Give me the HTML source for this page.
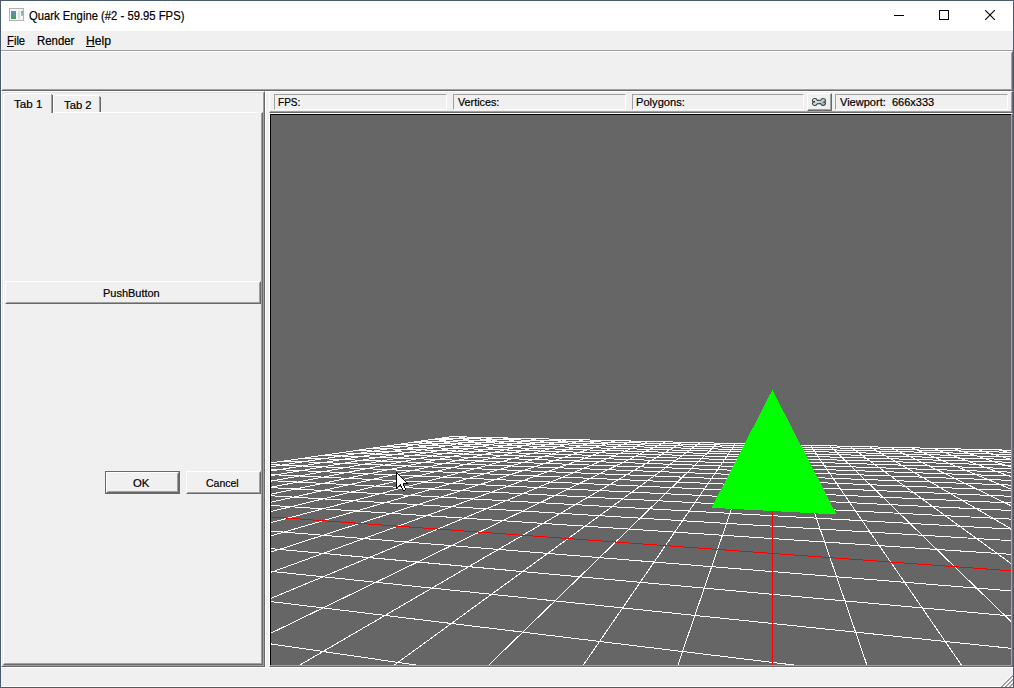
<!DOCTYPE html>
<html><head><meta charset="utf-8">
<style>
*{margin:0;padding:0;box-sizing:border-box}
html,body{width:1014px;height:688px;overflow:hidden;background:#f0f0f0;font-family:"Liberation Sans",sans-serif;color:#000}
.a{position:absolute}
.t{position:absolute;white-space:pre;line-height:1;font-family:"Liberation Sans",sans-serif;color:#000;transform-origin:0 0;-webkit-text-stroke:0.2px #000}
.r1{position:absolute;border-style:solid;border-width:1px;border-color:#fff #696969 #696969 #fff}
.r2{position:absolute;border-style:solid;border-width:1px;border-color:#e3e3e3 #a0a0a0 #a0a0a0 #e3e3e3}
.r2b{position:absolute;border-style:solid;border-width:1px;border-color:#f0f0f0 #a0a0a0 #a0a0a0 #f0f0f0}
.sk{position:absolute;border-style:solid;border-width:1px;border-color:#a0a0a0 #fff #fff #a0a0a0}
.gl{position:absolute;left:0;top:0}
</style></head><body>
<!-- window border -->
<div class="a" style="left:0;top:0;width:1014px;height:688px;border:1px solid #485c6d"></div>
<!-- title bar -->
<div class="a" style="left:1px;top:1px;width:1012px;height:30px;background:#fff"></div>
<!-- app icon -->
<div class="a" style="left:9px;top:8px;width:15px;height:13px;border:1px solid #b0b4b8;background:#f6f6f8"></div>
<div class="a" style="left:11px;top:11px;width:5px;height:8px;background:linear-gradient(#6a8ccc,#3fa04c)"></div>
<div class="a" style="left:18px;top:11px;width:2px;height:8px;background:#dedede"></div>
<div class="a" style="left:21px;top:11px;width:2px;height:5px;background:linear-gradient(#7a9cd0,#98d488)"></div>
<div class="t" style="left:29.35px;top:11px;font-size:11.9px;transform:scaleX(0.9481)">Quark Engine (#2 - 59.95 FPS)</div>
<!-- caption buttons -->
<div class="a" style="left:894px;top:15px;width:10px;height:1px;background:#000"></div>
<div class="a" style="left:939px;top:10px;width:10px;height:10px;border:1px solid #000"></div>
<svg class="a" style="left:985px;top:10px" width="10" height="10" viewBox="0 0 10 10"><path d="M0 0L10 10M10 0L0 10" stroke="#000" stroke-width="1.1"/></svg>
<!-- menu -->
<div class="t" style="left:7.3px;top:35px;font-size:12.0px;transform:scaleX(0.9368)"><u>F</u>ile</div>
<div class="t" style="left:36.95px;top:35px;font-size:12.0px;transform:scaleX(0.95)">Render</div>
<div class="t" style="left:86.4px;top:35px;font-size:12.0px;transform:scaleX(1.0125)"><u>H</u>elp</div>
<div class="a" style="left:1px;top:50px;width:1012px;height:1px;background:#a0a0a0"></div>
<!-- toolbar area raised -->
<div class="r1" style="left:1px;top:51px;width:1012px;height:40px"></div>
<div class="r2b" style="left:2px;top:52px;width:1010px;height:38px"></div>
<div class="a" style="left:1px;top:91px;width:1012px;height:1px;background:#fff"></div>
<!-- left dock -->
<div class="r1" style="left:1px;top:91px;width:264px;height:576px"></div>
<div class="r2" style="left:2px;top:92px;width:262px;height:574px"></div>
<!-- tab pane -->
<div class="r1" style="left:3px;top:112px;width:260px;height:553px"></div>
<div class="a" style="left:261px;top:113px;width:1px;height:551px;background:#a0a0a0"></div>
<div class="a" style="left:4px;top:663px;width:258px;height:1px;background:#a0a0a0"></div>
<!-- tab1 selected -->
<div class="a" style="left:3px;top:93px;width:50px;height:21px;background:#f0f0f0"></div>
<div class="a" style="left:5px;top:93px;width:46px;height:1px;background:#fff"></div>
<div class="a" style="left:4px;top:94px;width:1px;height:1px;background:#fff"></div>
<div class="a" style="left:3px;top:95px;width:1px;height:19px;background:#fff"></div>
<div class="a" style="left:51px;top:94px;width:1px;height:19px;background:#a0a0a0"></div>
<div class="a" style="left:52px;top:95px;width:1px;height:18px;background:#696969"></div>
<div class="t" style="left:13.6px;top:99px;font-size:11.0px;transform:scaleX(1.0538)">Tab 1</div>
<!-- tab2 -->
<div class="a" style="left:54px;top:95px;width:45px;height:1px;background:#fff"></div>
<div class="a" style="left:53px;top:96px;width:1px;height:16px;background:#fff"></div>
<div class="a" style="left:99px;top:96px;width:1px;height:16px;background:#a0a0a0"></div>
<div class="a" style="left:100px;top:97px;width:1px;height:15px;background:#696969"></div>
<div class="t" style="left:64.0px;top:100px;font-size:11.0px;transform:scaleX(1.0231)">Tab 2</div>
<!-- PushButton -->
<div class="r1" style="left:5px;top:281px;width:256px;height:23px"></div>
<div class="r2b" style="left:6px;top:282px;width:254px;height:21px"></div>
<div class="t" style="left:103.2px;top:288px;font-size:11.0px;transform:scaleX(0.9964)">PushButton</div>
<!-- OK -->
<div class="a" style="left:105px;top:471px;width:75px;height:23px;border:1px solid #696969"></div>
<div class="r1" style="left:106px;top:472px;width:73px;height:21px"></div>
<div class="r2b" style="left:107px;top:473px;width:71px;height:19px"></div>
<div class="t" style="left:133.37px;top:478px;font-size:11.0px;transform:scaleX(1.0286)">OK</div>
<!-- Cancel -->
<div class="r1" style="left:186px;top:471px;width:75px;height:23px"></div>
<div class="r2b" style="left:187px;top:472px;width:73px;height:21px"></div>
<div class="t" style="left:205.55px;top:478px;font-size:11.0px;transform:scaleX(0.9545)">Cancel</div>
<!-- splitter highlight -->
<div class="a" style="left:265px;top:91px;width:1px;height:574px;background:#fff"></div>
<!-- status panel -->
<div class="r1" style="left:269px;top:91px;width:744px;height:22px"></div>
<div class="a" style="left:270px;top:111px;width:742px;height:1px;background:#a0a0a0"></div>
<div class="a" style="left:1011px;top:92px;width:1px;height:20px;background:#a0a0a0"></div>
<!-- status labels -->
<div class="sk" style="left:274px;top:94px;width:173px;height:16px"></div>
<div class="t" style="left:277.69px;top:97px;font-size:11.0px;transform:scaleX(0.913)">FPS:</div>
<div class="sk" style="left:453px;top:94px;width:173px;height:16px"></div>
<div class="t" style="left:457.9px;top:97px;font-size:11.0px;transform:scaleX(0.978)">Vertices:</div>
<div class="sk" style="left:632px;top:94px;width:172px;height:16px"></div>
<div class="t" style="left:635.59px;top:97px;font-size:11.0px;transform:scaleX(1.0109)">Polygons:</div>
<div class="r1" style="left:807px;top:93px;width:25px;height:18px"></div>
<div class="a" style="left:830px;top:94px;width:1px;height:16px;background:#a0a0a0"></div>
<div class="a" style="left:808px;top:109px;width:23px;height:1px;background:#a0a0a0"></div>
<svg class="a" style="left:811px;top:97px" width="16" height="10" viewBox="0 0 16 10">
<defs><linearGradient id="wg" x1="0" y1="0" x2="1" y2="1"><stop offset="0" stop-color="#f4fbff"/><stop offset="0.5" stop-color="#c4d6de"/><stop offset="1" stop-color="#8c9ca4"/></linearGradient></defs>
<path d="M1.5 4.2L1.5 3.2Q2 1.5 3.8 1.5Q5.2 1.5 5.8 2.6L6.4 3.4L9.6 3.2L10.2 2.6Q10.8 1.5 12.2 1.5Q14 1.5 14.5 3.2L14.5 4.2L12.8 5L14.5 5.8L14.5 6.8Q14 8.5 12.2 8.5Q10.8 8.5 10.2 7.4L9.6 6.6L6.4 6.8L5.8 7.4Q5.2 8.5 3.8 8.5Q2 8.5 1.5 6.8L1.5 5.8L3.2 5Z" fill="url(#wg)" stroke="#3e4346" stroke-width="1.1"/>
<circle cx="3.3" cy="4.6" r="0.8" fill="#3e4346"/>
</svg>
<div class="sk" style="left:835px;top:94px;width:173px;height:16px"></div>
<div class="t" style="left:840.0px;top:97px;font-size:11.0px;transform:scaleX(1.0022)">Viewport:  666x333</div>
<!-- GL frame panel -->
<div class="r1" style="left:269px;top:113px;width:744px;height:554px"></div>
<div class="a" style="left:270px;top:665px;width:742px;height:1px;background:#a0a0a0"></div>
<div class="a" style="left:1011px;top:114px;width:1px;height:552px;background:#a0a0a0"></div>
<div class="a" style="left:270px;top:114px;width:741px;height:551px;background:#666;border-style:solid;border-width:1px 0 0 1px;border-color:#000"></div>
<svg class="gl" width="1014" height="688" viewBox="0 0 1014 688" shape-rendering="crispEdges"><path d="M451.40 436.64L271.00 462.89M451.40 436.64L1011.00 450.22M465.25 436.98L271.00 466.73M441.96 438.02L1011.00 452.30M479.31 437.32L271.00 471.00M431.94 439.47L1011.00 454.52M493.57 437.66L271.00 475.77M421.31 441.02L1011.00 456.92M508.04 438.02L271.00 481.13M409.98 442.67L1011.00 459.49M522.72 438.37L271.00 487.21M397.90 444.43L1011.00 462.27M537.63 438.73L271.00 494.16M384.99 446.31L1011.00 465.29M552.76 439.10L271.00 502.18M371.16 448.32L1011.00 468.57M568.11 439.47L271.00 511.53M356.30 450.48L1011.00 472.14M583.71 439.85L271.00 522.59M340.29 452.81L1011.00 476.05M599.54 440.24L271.00 535.85M323.01 455.32L1011.00 480.36M615.62 440.63L271.00 552.07M304.29 458.05L1011.00 485.12M631.95 441.02L271.00 572.33M283.94 461.01L1011.00 490.41M648.53 441.42L271.00 598.39M271.00 464.64L1011.00 496.32M665.38 441.83L271.00 633.13M271.00 469.31L1011.00 502.97M682.50 442.25L299.82 665.00M271.00 474.60L1011.00 510.50M699.90 442.67L394.33 665.00M271.00 480.65L1011.00 519.11M717.57 443.10L488.84 665.00M271.00 487.62L1011.00 529.05M735.54 443.54L583.35 665.00M271.00 495.76L1011.00 540.64M753.81 443.98L677.87 665.00M271.00 505.39L1011.00 554.35M791.26 444.89L866.89 665.00M271.00 531.04L1011.00 590.88M810.46 445.35L961.40 665.00M271.00 548.68L1011.00 616.00M829.99 445.83L1011.00 621.43M271.00 571.36L1011.00 648.30M849.86 446.31L1011.00 563.55M271.00 601.60L793.71 665.00M870.07 446.80L1011.00 528.83M271.00 643.93L415.77 665.00M890.64 447.30L1011.00 505.68M911.57 447.81L1011.00 489.14M932.88 448.32L1011.00 476.74M954.57 448.85L1011.00 467.10M976.65 449.38L1011.00 459.38M999.14 449.93L1011.00 453.07" stroke="#fff" stroke-width="1" fill="none"/><path d="M772.38 444.43L772.38 665.00M271.00 516.93L1011.00 570.79" stroke="#f00" stroke-width="1" fill="none"/><polygon points="711.65,507.76 836.58,514.50 772.38,389.93" fill="#0f0"/></svg>
<!-- cursor -->
<svg class="a" style="left:396px;top:472px" width="12" height="19" shape-rendering="crispEdges"><rect x="0" y="0" width="1" height="1"/><rect x="0" y="1" width="1" height="1"/><rect x="1" y="1" width="1" height="1"/><rect x="0" y="2" width="1" height="1"/><rect x="1" y="2" width="1" height="1" fill="#fff"/><rect x="2" y="2" width="1" height="1"/><rect x="0" y="3" width="1" height="1"/><rect x="1" y="3" width="1" height="1" fill="#fff"/><rect x="2" y="3" width="1" height="1" fill="#fff"/><rect x="3" y="3" width="1" height="1"/><rect x="0" y="4" width="1" height="1"/><rect x="1" y="4" width="1" height="1" fill="#fff"/><rect x="2" y="4" width="1" height="1" fill="#fff"/><rect x="3" y="4" width="1" height="1" fill="#fff"/><rect x="4" y="4" width="1" height="1"/><rect x="0" y="5" width="1" height="1"/><rect x="1" y="5" width="1" height="1" fill="#fff"/><rect x="2" y="5" width="1" height="1" fill="#fff"/><rect x="3" y="5" width="1" height="1" fill="#fff"/><rect x="4" y="5" width="1" height="1" fill="#fff"/><rect x="5" y="5" width="1" height="1"/><rect x="0" y="6" width="1" height="1"/><rect x="1" y="6" width="1" height="1" fill="#fff"/><rect x="2" y="6" width="1" height="1" fill="#fff"/><rect x="3" y="6" width="1" height="1" fill="#fff"/><rect x="4" y="6" width="1" height="1" fill="#fff"/><rect x="5" y="6" width="1" height="1" fill="#fff"/><rect x="6" y="6" width="1" height="1"/><rect x="0" y="7" width="1" height="1"/><rect x="1" y="7" width="1" height="1" fill="#fff"/><rect x="2" y="7" width="1" height="1" fill="#fff"/><rect x="3" y="7" width="1" height="1" fill="#fff"/><rect x="4" y="7" width="1" height="1" fill="#fff"/><rect x="5" y="7" width="1" height="1" fill="#fff"/><rect x="6" y="7" width="1" height="1" fill="#fff"/><rect x="7" y="7" width="1" height="1"/><rect x="0" y="8" width="1" height="1"/><rect x="1" y="8" width="1" height="1" fill="#fff"/><rect x="2" y="8" width="1" height="1" fill="#fff"/><rect x="3" y="8" width="1" height="1" fill="#fff"/><rect x="4" y="8" width="1" height="1" fill="#fff"/><rect x="5" y="8" width="1" height="1" fill="#fff"/><rect x="6" y="8" width="1" height="1" fill="#fff"/><rect x="7" y="8" width="1" height="1" fill="#fff"/><rect x="8" y="8" width="1" height="1"/><rect x="0" y="9" width="1" height="1"/><rect x="1" y="9" width="1" height="1" fill="#fff"/><rect x="2" y="9" width="1" height="1" fill="#fff"/><rect x="3" y="9" width="1" height="1" fill="#fff"/><rect x="4" y="9" width="1" height="1" fill="#fff"/><rect x="5" y="9" width="1" height="1" fill="#fff"/><rect x="6" y="9" width="1" height="1" fill="#fff"/><rect x="7" y="9" width="1" height="1" fill="#fff"/><rect x="8" y="9" width="1" height="1" fill="#fff"/><rect x="9" y="9" width="1" height="1"/><rect x="0" y="10" width="1" height="1"/><rect x="1" y="10" width="1" height="1" fill="#fff"/><rect x="2" y="10" width="1" height="1" fill="#fff"/><rect x="3" y="10" width="1" height="1" fill="#fff"/><rect x="4" y="10" width="1" height="1" fill="#fff"/><rect x="5" y="10" width="1" height="1" fill="#fff"/><rect x="6" y="10" width="1" height="1" fill="#fff"/><rect x="7" y="10" width="1" height="1" fill="#fff"/><rect x="8" y="10" width="1" height="1" fill="#fff"/><rect x="9" y="10" width="1" height="1" fill="#fff"/><rect x="10" y="10" width="1" height="1"/><rect x="0" y="11" width="1" height="1"/><rect x="1" y="11" width="1" height="1" fill="#fff"/><rect x="2" y="11" width="1" height="1" fill="#fff"/><rect x="3" y="11" width="1" height="1" fill="#fff"/><rect x="4" y="11" width="1" height="1" fill="#fff"/><rect x="5" y="11" width="1" height="1" fill="#fff"/><rect x="6" y="11" width="1" height="1" fill="#fff"/><rect x="7" y="11" width="1" height="1"/><rect x="8" y="11" width="1" height="1"/><rect x="9" y="11" width="1" height="1"/><rect x="10" y="11" width="1" height="1"/><rect x="11" y="11" width="1" height="1"/><rect x="0" y="12" width="1" height="1"/><rect x="1" y="12" width="1" height="1" fill="#fff"/><rect x="2" y="12" width="1" height="1" fill="#fff"/><rect x="3" y="12" width="1" height="1" fill="#fff"/><rect x="4" y="12" width="1" height="1"/><rect x="5" y="12" width="1" height="1" fill="#fff"/><rect x="6" y="12" width="1" height="1" fill="#fff"/><rect x="7" y="12" width="1" height="1"/><rect x="0" y="13" width="1" height="1"/><rect x="1" y="13" width="1" height="1" fill="#fff"/><rect x="2" y="13" width="1" height="1" fill="#fff"/><rect x="3" y="13" width="1" height="1"/><rect x="4" y="13" width="1" height="1"/><rect x="5" y="13" width="1" height="1" fill="#fff"/><rect x="6" y="13" width="1" height="1" fill="#fff"/><rect x="7" y="13" width="1" height="1"/><rect x="0" y="14" width="1" height="1"/><rect x="1" y="14" width="1" height="1" fill="#fff"/><rect x="2" y="14" width="1" height="1"/><rect x="5" y="14" width="1" height="1"/><rect x="6" y="14" width="1" height="1" fill="#fff"/><rect x="7" y="14" width="1" height="1" fill="#fff"/><rect x="8" y="14" width="1" height="1"/><rect x="0" y="15" width="1" height="1"/><rect x="1" y="15" width="1" height="1"/><rect x="5" y="15" width="1" height="1"/><rect x="6" y="15" width="1" height="1" fill="#fff"/><rect x="7" y="15" width="1" height="1" fill="#fff"/><rect x="8" y="15" width="1" height="1"/><rect x="0" y="16" width="1" height="1"/><rect x="6" y="16" width="1" height="1"/><rect x="7" y="16" width="1" height="1" fill="#fff"/><rect x="8" y="16" width="1" height="1" fill="#fff"/><rect x="9" y="16" width="1" height="1"/><rect x="6" y="17" width="1" height="1"/><rect x="7" y="17" width="1" height="1" fill="#fff"/><rect x="8" y="17" width="1" height="1" fill="#fff"/><rect x="9" y="17" width="1" height="1"/><rect x="7" y="18" width="1" height="1"/><rect x="8" y="18" width="1" height="1"/></svg>
<!-- status bar -->
<div class="a" style="left:1px;top:667px;width:264px;height:1px;background:#fff"></div><div class="a" style="left:265px;top:667px;width:4px;height:1px;background:#f8f8f8"></div><div class="a" style="left:269px;top:667px;width:744px;height:1px;background:#fff"></div>
<div class="a" style="left:1px;top:686px;width:1012px;height:1px;background:#fff"></div>
<svg class="a" style="left:1000px;top:674px" width="13" height="13" shape-rendering="crispEdges"><rect x="0" y="12" width="1" height="1" fill="#fff"/><rect x="1" y="11" width="1" height="1" fill="#fff"/><rect x="1" y="12" width="1" height="1" fill="#a0a0a0"/><rect x="2" y="10" width="1" height="1" fill="#fff"/><rect x="2" y="11" width="1" height="1" fill="#a0a0a0"/><rect x="2" y="12" width="1" height="1" fill="#a0a0a0"/><rect x="3" y="9" width="1" height="1" fill="#fff"/><rect x="3" y="10" width="1" height="1" fill="#a0a0a0"/><rect x="3" y="11" width="1" height="1" fill="#a0a0a0"/><rect x="4" y="8" width="1" height="1" fill="#fff"/><rect x="4" y="9" width="1" height="1" fill="#a0a0a0"/><rect x="4" y="10" width="1" height="1" fill="#a0a0a0"/><rect x="4" y="12" width="1" height="1" fill="#fff"/><rect x="5" y="7" width="1" height="1" fill="#fff"/><rect x="5" y="8" width="1" height="1" fill="#a0a0a0"/><rect x="5" y="9" width="1" height="1" fill="#a0a0a0"/><rect x="5" y="11" width="1" height="1" fill="#fff"/><rect x="5" y="12" width="1" height="1" fill="#a0a0a0"/><rect x="6" y="6" width="1" height="1" fill="#fff"/><rect x="6" y="7" width="1" height="1" fill="#a0a0a0"/><rect x="6" y="8" width="1" height="1" fill="#a0a0a0"/><rect x="6" y="10" width="1" height="1" fill="#fff"/><rect x="6" y="11" width="1" height="1" fill="#a0a0a0"/><rect x="6" y="12" width="1" height="1" fill="#a0a0a0"/><rect x="7" y="5" width="1" height="1" fill="#fff"/><rect x="7" y="6" width="1" height="1" fill="#a0a0a0"/><rect x="7" y="7" width="1" height="1" fill="#a0a0a0"/><rect x="7" y="9" width="1" height="1" fill="#fff"/><rect x="7" y="10" width="1" height="1" fill="#a0a0a0"/><rect x="7" y="11" width="1" height="1" fill="#a0a0a0"/><rect x="8" y="4" width="1" height="1" fill="#fff"/><rect x="8" y="5" width="1" height="1" fill="#a0a0a0"/><rect x="8" y="6" width="1" height="1" fill="#a0a0a0"/><rect x="8" y="8" width="1" height="1" fill="#fff"/><rect x="8" y="9" width="1" height="1" fill="#a0a0a0"/><rect x="8" y="10" width="1" height="1" fill="#a0a0a0"/><rect x="8" y="12" width="1" height="1" fill="#fff"/><rect x="9" y="3" width="1" height="1" fill="#fff"/><rect x="9" y="4" width="1" height="1" fill="#a0a0a0"/><rect x="9" y="5" width="1" height="1" fill="#a0a0a0"/><rect x="9" y="7" width="1" height="1" fill="#fff"/><rect x="9" y="8" width="1" height="1" fill="#a0a0a0"/><rect x="9" y="9" width="1" height="1" fill="#a0a0a0"/><rect x="9" y="11" width="1" height="1" fill="#fff"/><rect x="9" y="12" width="1" height="1" fill="#a0a0a0"/><rect x="10" y="2" width="1" height="1" fill="#fff"/><rect x="10" y="3" width="1" height="1" fill="#a0a0a0"/><rect x="10" y="4" width="1" height="1" fill="#a0a0a0"/><rect x="10" y="6" width="1" height="1" fill="#fff"/><rect x="10" y="7" width="1" height="1" fill="#a0a0a0"/><rect x="10" y="8" width="1" height="1" fill="#a0a0a0"/><rect x="10" y="10" width="1" height="1" fill="#fff"/><rect x="10" y="11" width="1" height="1" fill="#a0a0a0"/><rect x="10" y="12" width="1" height="1" fill="#a0a0a0"/><rect x="11" y="1" width="1" height="1" fill="#fff"/><rect x="11" y="2" width="1" height="1" fill="#a0a0a0"/><rect x="11" y="3" width="1" height="1" fill="#a0a0a0"/><rect x="11" y="5" width="1" height="1" fill="#fff"/><rect x="11" y="6" width="1" height="1" fill="#a0a0a0"/><rect x="11" y="7" width="1" height="1" fill="#a0a0a0"/><rect x="11" y="9" width="1" height="1" fill="#fff"/><rect x="11" y="10" width="1" height="1" fill="#a0a0a0"/><rect x="11" y="11" width="1" height="1" fill="#a0a0a0"/><rect x="12" y="0" width="1" height="1" fill="#fff"/><rect x="12" y="1" width="1" height="1" fill="#a0a0a0"/><rect x="12" y="2" width="1" height="1" fill="#a0a0a0"/><rect x="12" y="4" width="1" height="1" fill="#fff"/><rect x="12" y="5" width="1" height="1" fill="#a0a0a0"/><rect x="12" y="6" width="1" height="1" fill="#a0a0a0"/><rect x="12" y="8" width="1" height="1" fill="#fff"/><rect x="12" y="9" width="1" height="1" fill="#a0a0a0"/><rect x="12" y="10" width="1" height="1" fill="#a0a0a0"/><rect x="12" y="12" width="1" height="1" fill="#fff"/></svg>
</body></html>
